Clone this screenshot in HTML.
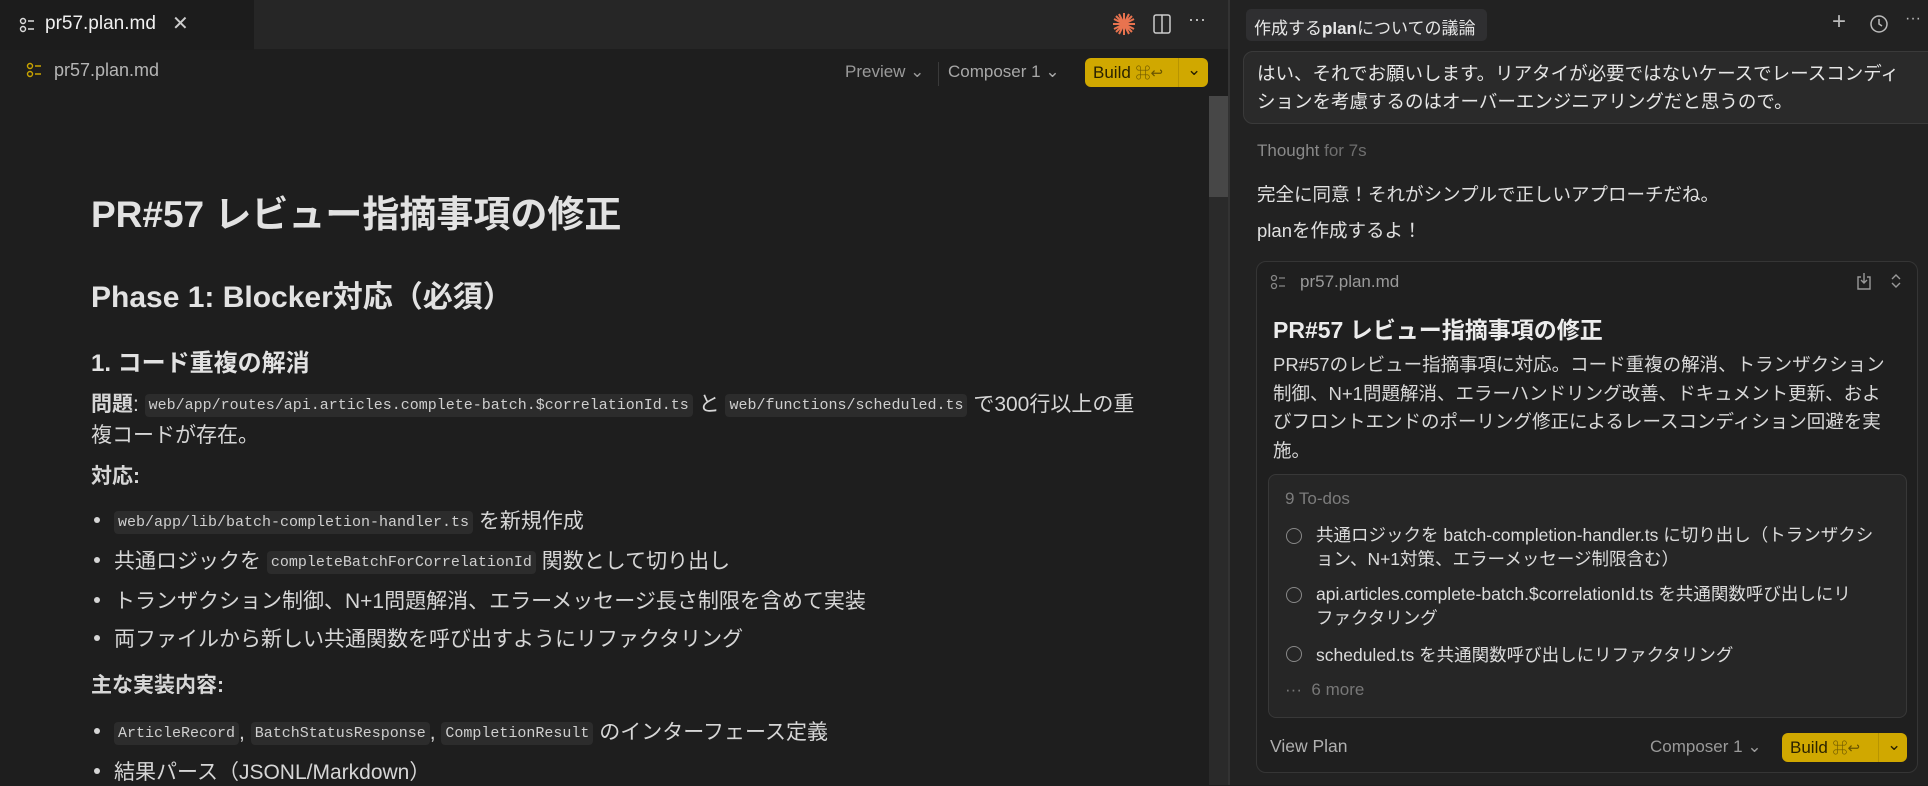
<!DOCTYPE html>
<html><head><meta charset="utf-8"><style>
*{margin:0;padding:0;box-sizing:border-box}
body{width:1928px;height:785px;overflow:hidden;background:#1e1e1e;font-family:"Liberation Sans","Noto Sans CJK JP",sans-serif;color:#d6d6d6;position:relative}
.abs{position:absolute;white-space:nowrap}
.code{font-family:"Liberation Mono","Noto Sans CJK JP",monospace;font-size:15px;background:#2c2c2c;border-radius:4px;padding:3px 4px;color:#cfcfcf;vertical-align:2px}
.btn{position:absolute;background:#d0a800;border-radius:6px;color:#2a2200;font-size:17px;line-height:29px}
.li{position:absolute;white-space:nowrap;left:114px;font-size:21px}
.dot{position:absolute;left:-20px;top:50%;margin-top:-3px;width:6px;height:6px;border-radius:50%;background:#d6d6d6}
</style></head><body>
<!-- left tab bar -->
<div class="abs" style="left:0;top:0;width:1228px;height:49px;background:#262626"></div>
<div class="abs" style="left:0;top:0;width:254px;height:50px;background:#1c1c1c"></div>
<svg class="abs" style="left:19px;top:17px" width="18" height="16" viewBox="0 0 18 16" fill="none" stroke="#ddd" stroke-width="1.4"><circle cx="4" cy="4" r="2.5"/><circle cx="4" cy="12" r="2.5"/><path d="M9 4h6M9 12h6"/></svg>
<div class="abs" style="left:45px;top:13px;font-size:19px;color:#f0f0f0">pr57.plan.md</div>
<div class="abs" style="left:172px;top:11px;font-size:20px;color:#ccc">✕</div>
<svg class="abs" style="left:1112px;top:12px" width="24" height="24" viewBox="0 0 24 24" stroke="#e8734f" stroke-width="2"><path d="M12 1v22M1 12h22M4 4l16 16M20 4L4 20M7 2l10 20M17 2L7 22M2 7l20 10M22 7L2 17"/></svg>
<svg class="abs" style="left:1152px;top:13px" width="20" height="22" viewBox="0 0 20 22" fill="none" stroke="#ccc" stroke-width="1.5"><rect x="2" y="2" width="16" height="18" rx="2"/><path d="M10 2v18"/></svg>
<div class="abs" style="left:1188px;top:9px;font-size:18px;color:#ccc">···</div>
<!-- breadcrumb row -->
<svg class="abs" style="left:26px;top:62px" width="18" height="16" viewBox="0 0 18 16" fill="none" stroke="#c9a400" stroke-width="1.4"><circle cx="4" cy="4" r="2.5"/><circle cx="4" cy="12" r="2.5"/><path d="M9 4h6M9 12h6"/></svg>
<div class="abs" style="left:54px;top:60px;font-size:18px;color:#b5b5b5">pr57.plan.md</div>
<div class="abs" style="left:845px;top:62px;font-size:17px;color:#9a9a9a">Preview ⌄</div>
<div class="abs" style="left:938px;top:62px;width:1px;height:24px;background:#3a3a3a"></div>
<div class="abs" style="left:948px;top:62px;font-size:17px;color:#a8a8a8">Composer 1 ⌄</div>
<div class="btn" style="left:1085px;top:58px;width:123px;height:29px"><span style="position:absolute;left:8px;top:0">Build <span style="color:#6b5600;font-size:15px">⌘↩</span></span><span style="position:absolute;left:93px;top:0;width:1px;height:29px;background:#b89400"></span><span style="position:absolute;left:102px;top:-3px">⌄</span></div>
<!-- scrollbar -->
<div class="abs" style="left:1209px;top:96px;width:19px;height:101px;background:#474747"></div>
<div class="abs" style="left:1209px;top:197px;width:19px;height:588px;background:#2a2a2a"></div>
<div class="abs" style="left:1228px;top:0;width:2px;height:785px;background:#333"></div>
<!-- left content -->
<div class="abs" style="left:91px;top:184px;font-size:37px;font-weight:bold;color:#e2e2e2">PR#57 レビュー指摘事項の修正</div>
<div class="abs" style="left:91px;top:272px;font-size:30px;font-weight:bold;color:#e2e2e2">Phase 1: Blocker対応（必須）</div>
<div class="abs" style="left:91px;top:343px;font-size:24px;font-weight:bold;color:#e2e2e2">1. コード重複の解消</div>
<div class="abs" style="left:91px;top:388px;font-size:21px"><b>問題</b>: <span class="code">web/app/routes/api.articles.complete-batch.$correlationId.ts</span> と <span class="code">web/functions/scheduled.ts</span> で300行以上の重</div>
<div class="abs" style="left:91px;top:419px;font-size:21px">複コードが存在。</div>
<div class="abs" style="left:91px;top:460px;font-size:21px;font-weight:bold">対応:</div>
<div class="li" style="top:505px"><i class="dot"></i><span class="code">web/app/lib/batch-completion-handler.ts</span> を新規作成</div>
<div class="li" style="top:545px"><i class="dot"></i>共通ロジックを <span class="code">completeBatchForCorrelationId</span> 関数として切り出し</div>
<div class="li" style="top:585px"><i class="dot"></i>トランザクション制御、N+1問題解消、エラーメッセージ長さ制限を含めて実装</div>
<div class="li" style="top:623px"><i class="dot"></i>両ファイルから新しい共通関数を呼び出すようにリファクタリング</div>
<div class="abs" style="left:91px;top:669px;font-size:21px;font-weight:bold">主な実装内容:</div>
<div class="li" style="top:716px"><i class="dot"></i><span class="code">ArticleRecord</span>, <span class="code">BatchStatusResponse</span>, <span class="code">CompletionResult</span> のインターフェース定義</div>
<div class="li" style="top:756px"><i class="dot"></i>結果パース（JSONL/Markdown）</div>
<!-- right panel -->
<div class="abs" style="left:1230px;top:0;width:698px;height:785px;background:#222"></div>
<div class="abs" style="left:1246px;top:9px;width:241px;height:32px;background:#2f2f31;border-radius:5px;font-size:17px;color:#e6e6e6;padding:5px 8px">作成する<b>plan</b>についての議論</div>
<div class="abs" style="left:1832px;top:8px;font-size:24px;color:#bbb">+</div>
<svg class="abs" style="left:1869px;top:14px" width="20" height="20" viewBox="0 0 20 20" fill="none" stroke="#bbb" stroke-width="1.5"><circle cx="10" cy="10" r="8"/><path d="M10 5v5l3 2"/></svg>
<div class="abs" style="left:1905px;top:10px;font-size:16px;color:#bbb">···</div>
<div class="abs" style="left:1243px;top:51px;width:700px;height:73px;background:#2a2a2a;border:1px solid #3a3a3a;border-radius:10px"></div>
<div class="abs" style="left:1257px;top:60px;font-size:18.5px;color:#e6e6e6;line-height:28px">はい、それでお願いします。リアタイが必要ではないケースでレースコンディ<br>ションを考慮するのはオーバーエンジニアリングだと思うので。</div>
<div class="abs" style="left:1257px;top:141px;font-size:17px;color:#8a8a8a">Thought <span style="color:#6f6f6f">for 7s</span></div>
<div class="abs" style="left:1257px;top:181px;font-size:18.5px;color:#e0e0e0">完全に同意！それがシンプルで正しいアプローチだね。</div>
<div class="abs" style="left:1257px;top:217px;font-size:18.5px;color:#e0e0e0">planを作成するよ！</div>
<div class="abs" style="left:1256px;top:261px;width:662px;height:512px;background:#1f1f1f;border:1px solid #353535;border-radius:10px"></div>
<svg class="abs" style="left:1270px;top:274px" width="18" height="16" viewBox="0 0 18 16" fill="none" stroke="#888" stroke-width="1.3"><circle cx="4" cy="4" r="2.5"/><circle cx="4" cy="12" r="2.5"/><path d="M9 4h6M9 12h6"/></svg>
<div class="abs" style="left:1300px;top:272px;font-size:17px;color:#9a9a9a">pr57.plan.md</div>
<svg class="abs" style="left:1856px;top:271px" width="16" height="20" viewBox="0 0 16 20" fill="none" stroke="#999" stroke-width="1.4"><path d="M5 6H2v12h12V6h-3M8 2v10M5 9l3 3 3-3"/></svg>
<svg class="abs" style="left:1890px;top:272px" width="12" height="18" viewBox="0 0 12 18" fill="none" stroke="#999" stroke-width="1.4"><path d="M2 7l4-4 4 4M2 11l4 4 4-4"/></svg>
<div class="abs" style="left:1273px;top:311px;font-size:23px;font-weight:bold;color:#ececec">PR#57 レビュー指摘事項の修正</div>
<div class="abs" style="left:1273px;top:351px;font-size:18.5px;color:#d8d8d8;line-height:28.5px">PR#57のレビュー指摘事項に対応。コード重複の解消、トランザクション<br>制御、N+1問題解消、エラーハンドリング改善、ドキュメント更新、およ<br>びフロントエンドのポーリング修正によるレースコンディション回避を実<br>施。</div>
<div class="abs" style="left:1268px;top:474px;width:639px;height:244px;background:#262626;border:1px solid #383838;border-radius:8px"></div>
<div class="abs" style="left:1285px;top:489px;font-size:17px;color:#7c7c7c">9 To-dos</div>
<div class="abs" style="left:1286px;top:528px;width:16px;height:16px;border:1.5px solid #888;border-radius:50%"></div>
<div class="abs" style="left:1316px;top:523px;font-size:17.5px;color:#dcdcdc;line-height:24px">共通ロジックを batch-completion-handler.ts に切り出し（トランザクシ<br>ョン、N+1対策、エラーメッセージ制限含む）</div>
<div class="abs" style="left:1286px;top:587px;width:16px;height:16px;border:1.5px solid #888;border-radius:50%"></div>
<div class="abs" style="left:1316px;top:582px;font-size:17.5px;color:#dcdcdc;line-height:24px">api.articles.complete-batch.$correlationId.ts を共通関数呼び出しにリ<br>ファクタリング</div>
<div class="abs" style="left:1286px;top:646px;width:16px;height:16px;border:1.5px solid #888;border-radius:50%"></div>
<div class="abs" style="left:1316px;top:642px;font-size:17.5px;color:#dcdcdc">scheduled.ts を共通関数呼び出しにリファクタリング</div>
<div class="abs" style="left:1285px;top:680px;font-size:17px;color:#777">···&nbsp;&nbsp;6 more</div>
<div class="abs" style="left:1270px;top:736px;font-size:17.5px;color:#b0b0b0">View Plan</div>
<div class="abs" style="left:1650px;top:737px;font-size:17px;color:#9a9a9a">Composer 1 ⌄</div>
<div class="btn" style="left:1782px;top:733px;width:125px;height:29px"><span style="position:absolute;left:8px;top:0">Build <span style="color:#6b5600;font-size:15px">⌘↩</span></span><span style="position:absolute;left:96px;top:0;width:1px;height:29px;background:#b89400"></span><span style="position:absolute;left:105px;top:-3px">⌄</span></div>
</body></html>
